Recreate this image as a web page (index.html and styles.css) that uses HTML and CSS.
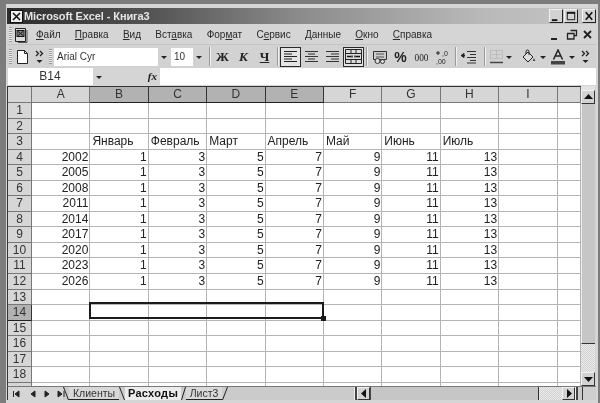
FILE: index.html
```html
<!DOCTYPE html>
<html lang="ru">
<head>
<meta charset="utf-8">
<title>Microsoft Excel - Книга3</title>
<link rel="stylesheet" href="styles.css">
</head>
<body>
<div class="window">
  <header class="titlebar">
    <svg class="title-icon" width="13" height="13" viewBox="0 0 13 13"><rect x=".5" y=".5" width="12" height="12" fill="#eee" stroke="#111"/><path d="M3 3l7 7M10 3l-7 7" stroke="#111" stroke-width="1.6"/></svg>
    <span class="title-text">Microsoft Excel - Книга3</span>
    <div class="win-buttons">
      <span class="win-btn"><svg width="13" height="12" viewBox="0 0 13 12"><path d="M2 10.5h6" stroke="#111" stroke-width="2"/></svg></span>
      <span class="win-btn"><svg width="13" height="12" viewBox="0 0 13 12"><path d="M2.5 2.5h8v7.5h-8z" fill="none" stroke="#111"/><path d="M2 2.5h9" stroke="#111" stroke-width="2"/></svg></span>
      <span class="win-btn win-close"><svg width="13" height="12" viewBox="0 0 13 12"><path d="M3 2l7 8M10 2l-7 8" stroke="#111" stroke-width="1.7"/></svg></span>
    </div>
  </header>

  <nav class="menubar">
    <span class="grip"></span>
    <svg class="doc-icon" width="16" height="16" viewBox="0 0 16 16"><path d="M2.5 1.5h10v13h-10z" fill="#ddd" stroke="#222"/><path d="M14 3v12.500H5" fill="none" stroke="#555"/><rect x="4" y="3.500" width="7" height="6" fill="#888" stroke="#111"/><path d="M5 4.500l5 4M10 4.500l-5 4" stroke="#111"/></svg>
    <div class="menu-items">
      <span><u>Ф</u>айл</span><span><u>П</u>равка</span><span><u>В</u>ид</span><span>Вст<u>а</u>вка</span><span>Фор<u>м</u>ат</span><span>С<u>е</u>рвис</span><span><u>Д</u>анные</span><span><u>О</u>кно</span><span><u>С</u>правка</span>
    </div>
    <div class="mdi">
      <svg width="15" height="14" viewBox="0 0 15 14"><path d="M3 11h6" stroke="#222" stroke-width="2"/></svg>
      <svg width="15" height="14" viewBox="0 0 15 14"><path d="M6.500 2.500h6v5h-2M3.500 5.500h6.500v5.500h-6.500z" fill="none" stroke="#222" stroke-width="1.300"/></svg>
      <svg width="15" height="14" viewBox="0 0 15 14"><path d="M4 3l7 7M11 3l-7 7" stroke="#222" stroke-width="1.800"/></svg>
    </div>
  </nav>

  <div class="toolbar">
    <span class="grip"></span>
    <span class="btn"><svg width="13" height="16" viewBox="0 0 13 16"><path d="M1.500 1.500h7l3 3v10h-10z" fill="#fff" stroke="#222"/><path d="M8.500 1.500v3h3" fill="none" stroke="#222"/></svg></span>
    <span class="chev"><svg width="11" height="16" viewBox="0 0 11 16"><path d="M2 2l2.500 2.500L2 7M6 2l2.500 2.500L6 7" fill="none" stroke="#222" stroke-width="1.300"/><path d="M2.500 11h6l-3 3z" fill="#222"/></svg></span>
    <span class="grip grip-font"></span>
    <div class="combo combo-font"><span class="field">Arial Cyr</span><span class="arrow"></span></div>
    <div class="combo combo-size"><span class="field">10</span><span class="arrow"></span></div>
    <span class="sep sep-a"></span>
    <span class="btn fmt fmt-zh">Ж</span>
    <span class="btn fmt fmt-k">К</span>
    <span class="btn fmt fmt-ch">Ч</span>
    <span class="sep sep-b"></span>
    <span class="btn pressed"><svg width="15" height="13" viewBox="0 0 15 13"><path d="M1 1.500h13M1 4h8M1 6.500h13M1 9h8M1 11.500h13" stroke="#222"/></svg></span>
    <span class="btn"><svg width="15" height="13" viewBox="0 0 15 13"><path d="M1 1.500h13M4 4h7M1 6.500h13M4 9h7M1 11.500h13" stroke="#333"/></svg></span>
    <span class="btn"><svg width="15" height="13" viewBox="0 0 15 13"><path d="M1 1.500h13M6 4h8M1 6.500h13M6 9h8M1 11.500h13" stroke="#333"/></svg></span>
    <span class="btn pressed"><svg width="17" height="15" viewBox="0 0 17 15"><path d="M.5.500h16v14H.5zM.5 4.500h16M.5 10.500h16M6 .5v4M11 .5v4M6 10.500v4M11 10.500v4" fill="#ddd" stroke="#222"/><path d="M2 7.500h4M11 7.500h4M7 6.500v2M10 6.500v2" stroke="#111" stroke-width="1.400"/></svg></span>
    <span class="sep sep-c"></span>
    <span class="btn btn-cur"><svg width="16" height="16" viewBox="0 0 16 16"><path d="M1.500 2.500h13v8h-13z" fill="#ccc" stroke="#333"/><path d="M4 5h8M4 8h8" stroke="#555"/><circle cx="5.500" cy="12" r="2.500" fill="#ddd" stroke="#333"/><circle cx="10.500" cy="12.500" r="2" fill="#ddd" stroke="#333"/></svg></span>
    <span class="btn fmt-pct">%</span>
    <span class="btn fmt-zero">000</span>
    <span class="btn"><svg width="15" height="16" viewBox="0 0 15 16"><text x="7" y="6.500" class="dec">,0</text><text x="1" y="15" class="dec">,00</text><path d="M1 4h4M3 2v4" stroke="#222"/></svg></span>
    <span class="sep sep-b"></span>
    <span class="btn"><svg width="16" height="14" viewBox="0 0 16 14"><path d="M6 1.500h9M9 4.500h6M6 7.500h9M9 10.500h6M6 13h9" stroke="#333"/><path d="M0 5.500h4M3 3.500l-3 2 3 2z" stroke="#222" fill="#222"/></svg></span>
    <span class="sep sep-d"></span>
    <span class="btn btn-split"><svg width="15" height="15" viewBox="0 0 15 15"><path d="M1.500 1.500h12v8h-12zM7.500 1.500v8M1.500 5.500h12" fill="none" stroke="#aaa" stroke-dasharray="1 1"/><path d="M1 13.500h13" stroke="#444" stroke-width="1.500"/></svg></span><span class="arrow arrow-bare"></span>
    <span class="btn btn-split btn-fill"><svg width="17" height="16" viewBox="0 0 17 16"><path d="M3 8l5-5 5 5-5 5z" fill="#ddd" stroke="#222"/><path d="M6 5V2.500a1.500 1.500 0 0 1 3 0V6" fill="none" stroke="#222"/><path d="M14 9l1.500 3h-3z" fill="#555"/></svg></span><span class="arrow arrow-bare"></span>
    <span class="btn btn-split btn-color"><svg width="16" height="16" viewBox="0 0 16 16"><path d="M3.500 10.500L8 1l4.500 9.500M5.500 7h5" fill="none" stroke="#222" stroke-width="1.500"/><rect x="1" y="12" width="14" height="3.500" fill="#444"/></svg></span><span class="arrow arrow-bare"></span>
    <span class="chev chev-end"><svg width="11" height="16" viewBox="0 0 11 16"><path d="M2 2l2.500 2.500L2 7M6 2l2.500 2.500L6 7" fill="none" stroke="#222" stroke-width="1.300"/><path d="M2.500 11h6l-3 3z" fill="#222"/></svg></span>
  </div>

  <div class="formula">
    <div class="namebox">B14</div>
    <span class="arrow arrow-name"></span>
    <span class="fx">fx</span>
    <div class="formula-input"></div>
  </div>

  <main class="workarea">
    <div class="sheet">
      <span class="corner"></span><span class="ch">A</span><span class="ch sel">B</span><span class="ch sel">C</span><span class="ch sel">D</span><span class="ch sel">E</span><span class="ch">F</span><span class="ch">G</span><span class="ch">H</span><span class="ch">I</span><span class="ch"></span>
      <span class="rh">1</span><span></span><span></span><span></span><span></span><span></span><span></span><span></span><span></span><span></span><span></span>
      <span class="rh">2</span><span></span><span></span><span></span><span></span><span></span><span></span><span></span><span></span><span></span><span></span>
      <span class="rh">3</span><span></span><span>Январь</span><span>Февраль</span><span>Март</span><span>Апрель</span><span>Май</span><span>Июнь</span><span>Июль</span><span></span><span></span>
      <span class="rh">4</span><span class="n">2002</span><span class="n">1</span><span class="n">3</span><span class="n">5</span><span class="n">7</span><span class="n">9</span><span class="n">11</span><span class="n">13</span><span></span><span></span>
      <span class="rh">5</span><span class="n">2005</span><span class="n">1</span><span class="n">3</span><span class="n">5</span><span class="n">7</span><span class="n">9</span><span class="n">11</span><span class="n">13</span><span></span><span></span>
      <span class="rh">6</span><span class="n">2008</span><span class="n">1</span><span class="n">3</span><span class="n">5</span><span class="n">7</span><span class="n">9</span><span class="n">11</span><span class="n">13</span><span></span><span></span>
      <span class="rh">7</span><span class="n">2011</span><span class="n">1</span><span class="n">3</span><span class="n">5</span><span class="n">7</span><span class="n">9</span><span class="n">11</span><span class="n">13</span><span></span><span></span>
      <span class="rh">8</span><span class="n">2014</span><span class="n">1</span><span class="n">3</span><span class="n">5</span><span class="n">7</span><span class="n">9</span><span class="n">11</span><span class="n">13</span><span></span><span></span>
      <span class="rh">9</span><span class="n">2017</span><span class="n">1</span><span class="n">3</span><span class="n">5</span><span class="n">7</span><span class="n">9</span><span class="n">11</span><span class="n">13</span><span></span><span></span>
      <span class="rh">10</span><span class="n">2020</span><span class="n">1</span><span class="n">3</span><span class="n">5</span><span class="n">7</span><span class="n">9</span><span class="n">11</span><span class="n">13</span><span></span><span></span>
      <span class="rh">11</span><span class="n">2023</span><span class="n">1</span><span class="n">3</span><span class="n">5</span><span class="n">7</span><span class="n">9</span><span class="n">11</span><span class="n">13</span><span></span><span></span>
      <span class="rh">12</span><span class="n">2026</span><span class="n">1</span><span class="n">3</span><span class="n">5</span><span class="n">7</span><span class="n">9</span><span class="n">11</span><span class="n">13</span><span></span><span></span>
      <span class="rh">13</span><span></span><span></span><span></span><span></span><span></span><span></span><span></span><span></span><span></span><span></span>
      <span class="rh rh-sel">14</span><span></span><span></span><span></span><span></span><span></span><span></span><span></span><span></span><span></span><span></span>
      <span class="rh">15</span><span></span><span></span><span></span><span></span><span></span><span></span><span></span><span></span><span></span><span></span>
      <span class="rh">16</span><span></span><span></span><span></span><span></span><span></span><span></span><span></span><span></span><span></span><span></span>
      <span class="rh">17</span><span></span><span></span><span></span><span></span><span></span><span></span><span></span><span></span><span></span><span></span>
      <span class="rh">18</span><span></span><span></span><span></span><span></span><span></span><span></span><span></span><span></span><span></span><span></span>
      <span class="rh rh-cut"></span><span></span><span></span><span></span><span></span><span></span><span></span><span></span><span></span><span></span><span></span>
      <div class="selection"><span class="handle"></span></div>
    </div>
    <div class="vscroll">
      <span class="sb-btn"><svg width="9" height="6" viewBox="0 0 9 6"><path d="M4.500 0L9 5H0z" fill="#111"/></svg></span>
      <span class="sb-thumb"></span>
      <span class="sb-track"></span>
      <span class="sb-btn"><svg width="9" height="6" viewBox="0 0 9 6"><path d="M4.500 6L0 1h9z" fill="#111"/></svg></span>
    </div>
  </main>

  <footer class="bottom">
    <div class="tab-nav">
      <svg width="54" height="12" viewBox="0 0 54 12"><path d="M2.500 3v6M8 3v6l-4-3zM24 3v6l-4-3zM34 3v6l4-3zM47 3v6l4-3zM53 3v6" fill="#222" stroke="#222"/></svg>
    </div>
    <div class="tabs">
      <svg class="slant" width="6" height="13" viewBox="0 0 6 13"><path d="M.5 0l5 13" stroke="#222"/></svg>
      <span class="tab tab-a">Клиенты</span>
      <svg class="slant" width="6" height="13" viewBox="0 0 6 13"><path d="M.5 0l5 13" stroke="#222"/></svg>
      <span class="tab tab-active">Расходы</span>
      <svg class="slant" width="5" height="13" viewBox="0 0 5 13"><path d="M4.500 0l-4 13" stroke="#222"/></svg>
      <span class="tab tab-c">Лист3</span>
      <svg class="slant" width="6" height="13" viewBox="0 0 6 13"><path d="M5.500 0l-5 13" stroke="#222"/></svg>
    </div>
    <div class="hscroll">
      <span class="split"></span>
      <span class="sb-btn sb-h"><svg width="6" height="9" viewBox="0 0 6 9"><path d="M0 4.500L5 0v9z" fill="#111"/></svg></span>
      <span class="sb-thumb-h"></span>
      <span class="sb-track-h"></span>
      <span class="sb-btn sb-h"><svg width="6" height="9" viewBox="0 0 6 9"><path d="M6 4.500L1 0v9z" fill="#111"/></svg></span>
      <span class="split"></span>
    </div>
    <span class="sizebox"></span>
  </footer>
</div>
</body>
</html>
```

FILE: styles.css
```css
* { box-sizing: border-box; }
html, body { margin: 0; padding: 0; }
body {
  width: 600px;
  height: 403px;
  overflow: hidden;
  background: #7c7c7c;
  padding: 4px 2px 0 6px;
  font-family: "Liberation Sans", Arial, sans-serif;
  color: #1c1c1c;
}
.window {
  height: 399px;
  background: #d5d5d5;
  padding: 4px 2px 0 1px;
  display: flex;
  flex-direction: column;
  filter: grayscale(1) blur(.3px);
}

/* Title bar */
.titlebar {
  height: 16px;
  flex: none;
  display: flex;
  align-items: center;
  background: linear-gradient(90deg, #2c2c2c 0%, #555 25%, #8c8c8c 50%, #b8b8b8 80%, #c6c6c6 100%);
  padding-left: 3px;
}
.title-icon { flex: none; }
.title-text {
  margin-left: 1px;
  color: #e6e6e6;
  font-size: 11px;
  font-weight: bold;
  letter-spacing: -.1px;
}
.win-buttons { margin-left: auto; display: flex; }
.win-btn {
  width: 14px;
  height: 14px;
  margin-right: 1px;
  background: #d2d2d2;
  border: 1px solid;
  border-color: #f2f2f2 #222 #222 #f2f2f2;
  display: flex;
  align-items: center;
  justify-content: center;
}
.win-close { margin-left: 3px; margin-right: 0; }

/* Menu */
.menubar {
  height: 21px;
  flex: none;
  display: flex;
  align-items: center;
  padding: 1px 0 0 2px;
  border-bottom: 1px solid #c4c4c4;
}
.grip {
  width: 3px;
  height: 15px;
  flex: none;
  background: repeating-linear-gradient(180deg, #999 0 1px, #eee 1px 2px);
}
.doc-icon { margin-left: 1px; flex: none; }
.menu-items {
  display: flex;
  gap: 14.25px;
  margin-left: 7px;
  font-size: 10px;
  color: #2a2a2a;
}
.mdi { margin-left: auto; display: flex; gap: 1px; margin-right: 1px; }

/* Toolbar */
.toolbar {
  height: 23px;
  flex: none;
  display: flex;
  align-items: center;
  padding-left: 2px;
  background: #d2d2d2;
}
.btn {
  width: 21px;
  height: 20px;
  flex: none;
  display: flex;
  align-items: center;
  justify-content: center;
  color: #222;
}
.btn-cur { margin-left: 1px; }
.btn-split { width: 18px; margin-left: 1px; }
.btn-fill { width: 22px; margin-left: 4px; }
.btn-color { width: 20px; margin-left: 1px; }
.pressed { background: #e4e4e4; border: 1px solid #2a2a2a; }
.chev {
  width: 13px;
  height: 20px;
  flex: none;
  display: flex;
  align-items: center;
  justify-content: center;
}
.chev-end { margin-left: 3px; }
.grip-font { margin-left: 3px; }
.combo { display: flex; height: 18px; flex: none; }
.combo-font { width: 116px; margin-left: 2px; }
.combo-size { width: 34px; margin-left: 1px; }
.combo .field {
  flex: 1;
  background: #fff;
  font-size: 10px;
  line-height: 18px;
  padding-left: 3px;
  color: #333;
}
.arrow {
  position: relative;
  width: 12px;
  flex: none;
  display: block;
  align-self: stretch;
}
.arrow::after {
  content: "";
  position: absolute;
  left: 3px;
  top: 50%;
  margin-top: -1px;
  border: 3px solid transparent;
  border-top: 3px solid #222;
  border-bottom: 0;
}
.arrow-bare { width: 8px; }
.arrow-bare::after { left: 1px; }
.sep { width: 2px; height: 19px; flex: none; background: linear-gradient(90deg, #9a9a9a 50%, #f0f0f0 50%); }
.sep-a { margin: 0 1px 0 4px; }
.sep-b { margin: 0 1px 0 2px; }
.sep-c { margin: 0 0 0 2px; }
.sep-d { margin: 0 0 0 5px; }
.fmt { font-family: "Liberation Serif", serif; font-weight: bold; font-size: 13px; }
.fmt-k { font-style: italic; }
.fmt-ch { text-decoration: underline; }
.fmt-pct { font-size: 14px; font-weight: bold; }
.fmt-zero { font-family: "Liberation Serif", serif; font-size: 11px; transform: scaleX(.85); }
.dec { font: 7px "Liberation Sans", sans-serif; fill: #222; }

/* Formula bar */
.formula {
  height: 18px;
  flex: none;
  display: flex;
  align-items: stretch;
  padding: 0 0 1px 1px;
}
.namebox {
  width: 85px;
  background: #fff;
  text-align: center;
  font-size: 12px;
  line-height: 17px;
  padding-right: 1px;
  color: #333;
}
.arrow-name { width: 15px; }
.fx {
  width: 52px;
  font: italic bold 11px/17px "Liberation Serif", serif;
  text-align: right;
  padding-right: 3px;
}
.formula-input { flex: 1; background: #fff; }

/* Sheet */
.workarea { flex: none; height: 300px; display: flex; }
.sheet {
  position: relative;
  width: 574px;
  height: 300px;
  overflow: hidden;
  background: #fff;
  display: grid;
  grid-template-columns: 24px repeat(9, 58.4px) 1fr;
  grid-template-rows: 16px;
  grid-auto-rows: 15.55px;
  border-top: 1px solid #333;
  border-left: 1px solid #333;
  font-size: 12px;
  color: #222;
}
.sheet > span {
  border-right: 1px solid #b4b4b4;
  border-bottom: 1px solid #b4b4b4;
  line-height: 14px;
  padding: 0 1px 0 2px;
  white-space: nowrap;
  overflow: hidden;
}
.sheet > .n { text-align: right; }
.sheet > .corner,
.sheet > .ch,
.sheet > .rh {
  background: #d6d6d6;
  text-align: center;
  color: #333;
  border-right-color: #777;
  border-bottom-color: #777;
  padding: 0;
}
.sheet > .sel,
.sheet > .rh-sel {
  background: #b2b2b2;
  border-right-color: #333;
  border-bottom-color: #222;
}
.selection {
  position: absolute;
  left: 81px;
  top: 215px;
  width: 235px;
  height: 17px;
  border: 2px solid #1a1a1a;
  pointer-events: none;
}
.handle {
  position: absolute;
  right: -4px;
  bottom: -4px;
  width: 5px;
  height: 5px;
  background: #1a1a1a;
}

/* Scrollbars */
.vscroll {
  width: 14px;
  height: 300px;
  flex: none;
  display: flex;
  flex-direction: column;
  padding-top: 4px;
  background: #e2e2e2;
  border-top: 0;
}
.sb-btn {
  width: 14px;
  height: 14px;
  flex: none;
  background: #d2d2d2;
  border: 1px solid;
  border-color: #f2f2f2 #333 #333 #f2f2f2;
  display: flex;
  align-items: center;
  justify-content: center;
}
.sb-thumb {
  height: 240px;
  flex: none;
  background: #c6c6c6;
  border-bottom: 1px solid #333;
  border-left: 1px solid #eee;
}
.sb-track {
  flex: 1;
  background: repeating-conic-gradient(#d0d0d0 0 25%, #ececec 0 50%) 0 0 / 2px 2px;
}

/* Bottom strip */
.bottom {
  height: 14px;
  flex: none;
  display: flex;
  align-items: stretch;
  background: #cbcbcb;
  border-top: 1px solid #777;
  border-left: 1px solid #333;
  font-size: 11px;
}
.tab-nav { width: 55px; flex: none; padding: 1px 0 0 3px; background: #d5d5d5; }
.tab-nav svg { display: block; }
.tabs { width: 291px; flex: none; display: flex; align-items: flex-start; }
.slant { flex: none; }
.tab {
  height: 13px;
  line-height: 12px;
  border-bottom: 1px solid #222;
  color: #333;
  text-align: center;
  white-space: nowrap;
  background: #d8d8d8;
}
.tab-a { width: 50px; font-size: 10.500px; }
.tab-active { width: 56px; font-weight: bold; color: #111; background: #ececec; border-bottom: 0; letter-spacing: .3px; }
.tab-c { width: 36px; font-size: 10.500px; }
.hscroll { display: flex; flex: none; align-items: stretch; }
.split { width: 3px; flex: none; background: linear-gradient(90deg, #eee 50%, #444 50%); }
.sb-h { width: 13px; height: 13px; }
.sb-thumb-h { width: 169px; flex: none; background: #c6c6c6; border-right: 1px solid #333; border-left: 1px solid #444; }
.sb-track-h { width: 23px; flex: none; background: repeating-conic-gradient(#d0d0d0 0 25%, #ececec 0 50%) 0 0 / 2px 2px; }
.sizebox { width: 14px; flex: none; margin-left: auto; background: #cfcfcf; border-left: 1px solid #333; }
```
